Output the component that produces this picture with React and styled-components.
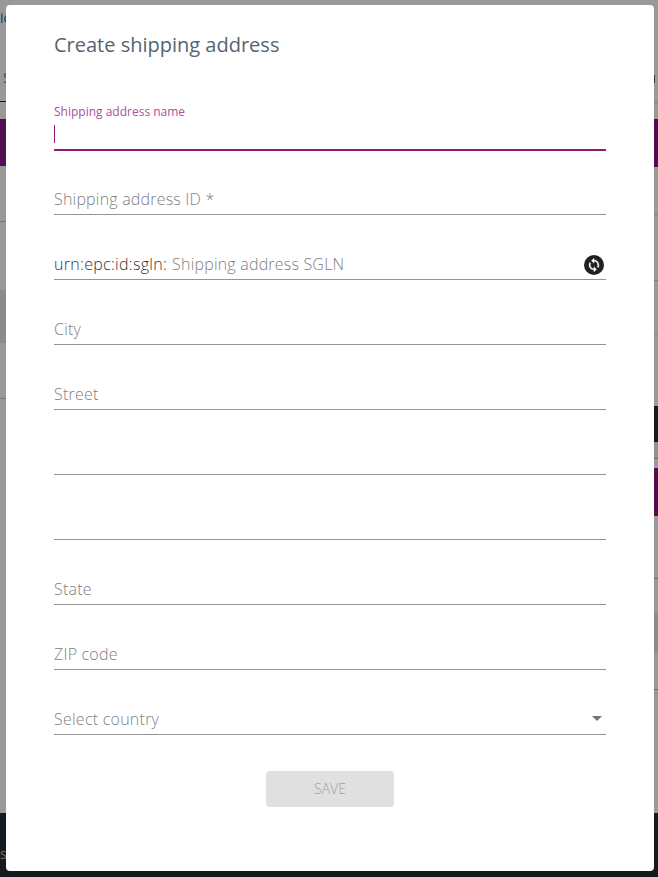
import styled, { createGlobalStyle } from 'styled-components'

const GlobalStyle = createGlobalStyle`
html, body {
  margin: 0;
  padding: 0;
  background: #fff;
  font-family: "Open Sans", "Liberation Sans", sans-serif;
}
* { box-sizing: border-box; }
`

// page behind the dialog, only its edges stay visible
const Page = styled.div`
position: relative;
width: 658px;
height: 877px;
display: flex;
flex-direction: column;
overflow: hidden;`

const Main = styled.div`
flex: 1;
display: flex;
justify-content: space-between;`

const Strip = styled.div`
width: ${p => p.$width}px;
display: flex;
flex-direction: column;
overflow: hidden;`

const Row = styled.div`
height: ${p => p.$h}px;
flex-shrink: 0;
padding-top: ${p => p.$top || 0}px;
padding-left: ${p => p.$left || 0}px;
background: ${p => p.$bg || '#fff'};
border-bottom: ${p => p.$line ? `1px solid ${p.$line}` : 'none'};
color: ${p => p.$color || '#333'};
font-size: 14px;
line-height: 16px;
white-space: nowrap;`

const Corner = styled.div`
width: 3px;
height: 8px;
margin-left: 0;
border-top: 1px solid #666;
border-right: 1px solid #666;`

const Footer = styled.div`
height: 64px;
flex-shrink: 0;
padding: 33px 0 0 0;
background: #222d33;
color: #c9b48a;
font-size: 14px;
line-height: 16px;`

const Scrim = styled.div`
position: absolute;
inset: 0;
background: rgba(0, 0, 0, 0.4);`

const Dialog = styled.div`
position: absolute;
left: 6px;
top: 5px;
width: 648px;
height: 866px;
padding: 0 48px;
background: #fff;
border-radius: 4px;`

const Title = styled.h2`
margin: 0;
height: 80px;
padding-top: 25px;
font-size: 20px;
line-height: 30px;
font-weight: 400;
color: #56646f;`

const Field = styled.div`
position: relative;
height: 65px;
display: flex;
align-items: center;
padding-top: 33px;
border-bottom: 1px solid ${p => p.$active ? '#8e1b78' : '#949494'};
box-shadow: ${p => p.$active ? '0 1px 0 #8e1b78' : 'none'};`

const FloatLabel = styled.label`
position: absolute;
left: 0;
top: 18px;
font-size: 12px;
line-height: 18px;
color: #a8529b;`

const Caret = styled.span`
position: absolute;
left: 0;
top: 40px;
width: 1px;
height: 18px;
background: #8e1b78;`

const Prefix = styled.span`
font-size: 16px;
font-weight: 300;
letter-spacing: 0.3px;
line-height: 30px;
color: #333;
white-space: nowrap;
margin-right: 5px;`

const Input = styled.input`
flex: 1;
min-width: 0;
height: 30px;
padding: 0;
border: 0;
outline: 0;
background: transparent;
font-family: inherit;
font-size: 16px;
font-weight: 300;
letter-spacing: 0.2px;
color: #333;
&::placeholder {
  color: #808080;
  opacity: 1;
}`

const Placeholder = styled.span`
flex: 1;
font-size: 16px;
font-weight: 300;
letter-spacing: 0.24px;
line-height: 30px;
color: #808080;`

const Arrow = styled.span`
width: 0;
height: 0;
margin-right: 4px;
border-left: 5px solid transparent;
border-right: 5px solid transparent;
border-top: 5px solid #757575;`

const IconButton = styled.span`
display: flex;
width: 20px;
height: 20px;
margin: 2px 2px 0 0;`

const Actions = styled.div`
display: flex;
justify-content: center;
margin-top: 36px;`

const SaveButton = styled.button`
width: 128px;
height: 36px;
padding: 0 0 2px;
border: 0;
border-radius: 4px;
background: #e0e0e0;
color: #a0a0a0;
font-family: inherit;
font-size: 14px;
font-weight: 300;
cursor: default;`

const SyncIcon = () => (
  <svg width="20" height="20" viewBox="0 0 20 20">
    <circle cx="10" cy="10" r="10" fill="#212121" />
    <g transform="translate(2.56 2.56) scale(0.62)">
      <path
        fill="#fff"
        stroke="#fff"
        strokeWidth="0.6"
        d="M12 4V1L8 5l4 4V6c3.31 0 6 2.69 6 6 0 1.01-.25 1.97-.7 2.8l1.46 1.46C19.54 15.03 20 13.57 20 12c0-4.42-3.58-8-8-8zm0 14c-3.31 0-6-2.69-6-6 0-1.01.25-1.97.7-2.8L5.24 7.74C4.46 8.97 4 10.43 4 12c0 4.42 3.58 8 8 8v3l4-4-4-4v3z"
      />
    </g>
  </svg>
)

const leftRows = [
  { h: 58, top: 10, color: '#1a5fa8', text: 'ic' },
  { h: 44, top: 12, left: 3, color: '#777', text: 'S', line: '#222d33' },
  { h: 17 },
  { h: 47, bg: '#851a85' },
  { h: 56, line: '#c8c8c8' },
  { h: 68 },
  { h: 53, bg: '#e8e8e8' },
  { h: 56, line: '#c8c8c8' },
]

const rightRows = [
  { h: 75 },
  { h: 28, line: '#d8d8d8', corner: true },
  { h: 16 },
  { h: 48, bg: '#851a85' },
  { h: 48, line: '#d8d8d8' },
  { h: 66, line: '#d8d8d8' },
  { h: 54, line: '#e4e4e4' },
  { h: 71 },
  { h: 36, bg: '#222d33' },
  { h: 17, bg: '#f4f4f4', line: '#b8b8b8' },
  { h: 9 },
  { h: 48, bg: '#851a85' },
  { h: 63, line: '#b8b8b8' },
  { h: 34 },
  { h: 40, bg: '#e8e8e8' },
  { h: 37, line: '#b8b8b8' },
]

const fields = ['Shipping address ID *']
const addressFields = ['City', 'Street', '', '', 'State', 'ZIP code']

const renderRows = rows => rows.map((r, i) => (
  <Row key={i} $h={r.h} $top={r.top} $left={r.left} $bg={r.bg} $line={r.line} $color={r.color}>
    {r.corner ? <Corner /> : r.text}
  </Row>
))

export default function App() {
  return (
    <Page>
      <GlobalStyle />
      <Main>
        <Strip $width={8}>{renderRows(leftRows)}</Strip>
        <Strip $width={6}>{renderRows(rightRows)}</Strip>
      </Main>
      <Footer>s</Footer>
      <Scrim />
      <Dialog>
        <Title>Create shipping address</Title>
        <Field $active>
          <FloatLabel>Shipping address name</FloatLabel>
          <Caret />
          <Input />
        </Field>
        {fields.map(f => (
          <Field key={f}><Input placeholder={f} /></Field>
        ))}
        <Field>
          <Prefix>urn:epc:id:sgln:</Prefix>
          <Input placeholder="Shipping address SGLN" />
          <IconButton><SyncIcon /></IconButton>
        </Field>
        {addressFields.map((f, i) => (
          <Field key={i}><Input placeholder={f} /></Field>
        ))}
        <Field>
          <Placeholder>Select country</Placeholder>
          <Arrow />
        </Field>
        <Actions>
          <SaveButton disabled>SAVE</SaveButton>
        </Actions>
      </Dialog>
    </Page>
  )
}
